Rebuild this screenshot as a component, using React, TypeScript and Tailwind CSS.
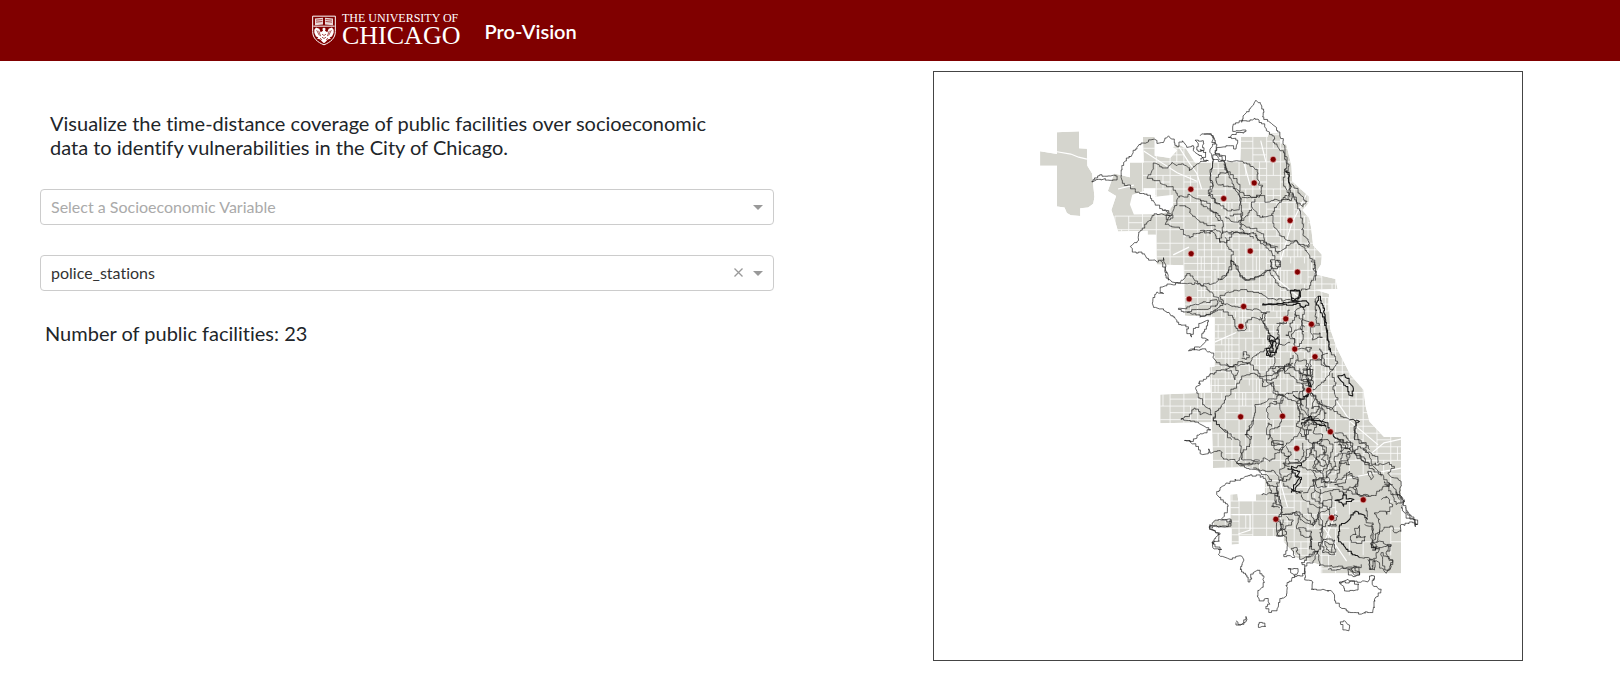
import { useState } from "react";

type Point = [number, number];

/* A traced group: origin of the map tile, then its lines, in thirds of a map unit. */
type Tile = { x: number; y: number; lines: string[]; heavy?: string[] };

const LAND = [
  "345,184 401,181 401,225 421,226 422,270 434,290 440,350 437,368 424,378 404,380 404,400 380,398 370,392 364,378 345,375 345,270 302,270 302,233 345,240",
  "563,196 593,196 593,244 632,250 650,230 638,222 655,216 672,225 695,262 735,262 810,260 812,195 880,195 880,186 912,186 912,212 927,215 940,270 942,310 985,350 985,365 968,385 985,405 990,430 995,475 1018,500 1015,525 1000,550 1052,562 1057,588 1000,590 1035,600 1038,690 1055,740 1090,810 1123,848 1128,890 1138,930 1175,970 1218,970 1218,1322 1014,1322 1014,1300 950,1280 950,1275 920,1240 920,1225 807,1225 807,1246 788,1248 788,1205 745,1200 740,1185 785,1185 785,1118 803,1117 805,1135 850,1135 850,1117 872,1117 872,1060 830,1048 741,1050 738,932 607,934 607,860 735,855 732,790 745,788 745,660 670,657 666,527 598,525 596,448 575,448 575,438 500,440 490,405 483,384 495,348 474,335 490,290 530,300 530,262 565,262",
];
const HOLE =
  "536,345 565,335 565,328 595,328 595,350 640,345 640,372 625,390 600,395 540,396 530,370";

const DIAGONALS = [
  "345,234 380,240 400,248 421,253",
  "565,232 610,262 650,288 700,310",
  "655,222 680,262 700,290 712,330",
  "862,205 875,260",
  "820,265 835,320",
  "900,560 960,610",
  "745,725 800,700",
  "680,480 640,500",
  "910,1080 930,1150",
  "1020,1200 1080,1290",
  "1145,1010 1175,985 1218,975",
  "1060,1080 1218,1050",
  "500,330 540,320",
  "1020,1250 1055,1160",
  "1050,870 1090,930 1160,990",
  "990,320 940,420 900,560",
  "790,1170 835,1170 835,1210 805,1220",
];

const TILES: Tile[] = [
  {
    x: 1020,
    y: 80,
    lines: [
      "213,303 222,292 238,285 262,286 285,286 290,292 285,298 235,296 215,304",
      "305,268 310,245 318,232 335,222 345,205 358,190 385,183 402,175 410,188 430,185 445,165 455,175 470,198 487,180 500,200 520,195 525,215 565,240 548,242 530,250 508,270 490,252 470,255 455,245 440,262 400,247 395,270 380,293 410,300 430,312 455,318 478,350 510,342 530,355 560,362 580,395 600,420",
      "305,268 302,290 312,308 345,330 380,340 405,370 435,390 450,405 470,375 475,350",
      "478,375 510,385 508,395 525,410 545,425 560,430 585,440",
      "450,405 410,400 380,425 358,455 355,480 330,498 340,515 365,515 385,535 410,545 430,532 435,560 445,600",
      "450,405 435,432 470,440 490,455 512,472 540,455 575,450 600,485",
      "552,160 578,165 585,190 570,205 580,240",
      "525,178 550,180 550,210 530,208 535,190 525,178",
      "580,240 570,290 578,305 565,340 600,370",
      "430,388 445,390 458,405 445,418 438,400",
    ],
  },
  {
    x: 1200,
    y: 80,
    lines: [
      "168,58 185,75 192,95 188,108 215,128 230,140 240,165 255,195 262,240 268,290 270,320 280,345 300,385 308,430 310,465 325,480 328,500 305,492 280,482 262,480 240,460 222,440 215,400 235,370 265,350 272,320",
      "168,58 150,85 135,100 128,120 100,130 98,148 120,150 138,152 118,155 85,170 112,178 108,205 85,195 60,200 45,212 38,235 55,242 75,240 72,225 45,218",
      "125,125 150,118 165,112 185,125 200,150 222,165 220,185 235,200 250,210 260,270 250,290 262,330 270,350",
      "80,240 110,240 150,250 172,272 172,295 188,318 185,340 155,352 120,335 100,310 85,280 75,250",
      "40,240 32,290 40,315 25,345 50,370 80,390 118,388 125,355 100,320 50,308 48,290 60,276 85,275",
      "125,350 160,350 190,345 200,365 215,360 250,358 262,345",
      "0,360 30,385 60,405 70,430 68,460 95,452 120,460 160,455 175,480 200,490 235,520 255,505 285,480 320,510 345,545 345,600",
      "165,355 155,380 180,410 215,405",
      "75,410 110,425 130,420 155,385",
      "90,405 125,400 125,430 150,440 190,460 200,485 235,500",
      "0,450 30,460 45,445 65,460 60,487 80,487 75,470",
      "95,460 80,490 100,520 95,540 80,580 60,600",
      "95,540 120,580 138,600 170,590 205,570 220,565 240,600",
      "0,165 15,160 40,165 35,185 50,190 45,215 70,240 80,270 100,290 120,320 118,345 128,395 120,440 135,460",
      "0,205 18,215 12,230 0,235",
      "275,310 295,330 322,362 310,378 290,365 280,340 275,360 255,350",
      "228,540 240,545 238,560 228,558 228,540",
      "165,465 190,490 215,515 225,535 212,545 215,565",
      "45,222 72,242 80,268",
      "85,460 115,456 150,460 160,475",
    ],
    heavy: ["255,265 268,275 266,300 275,320"],
  },
  {
    x: 1120,
    y: 260,
    lines: [
      "120,0 135,20 135,45 155,65 180,68 195,52 210,40 225,62 245,75 280,70 315,45 335,20 335,0 360,40 380,60 410,50 450,28 460,50 475,75 510,90",
      "452,0 455,18 470,25 482,10 470,0",
      "575,0 585,15 580,25 590,45 575,60 570,85 545,92",
      "180,68 240,70 275,95 310,130",
      "180,68 140,75 120,88 130,100 110,95 98,115 100,140 130,150 170,180 190,195 205,200 200,215 215,230 220,205 240,190 265,180 245,230 265,240 240,262 205,272 240,268 270,275 285,300 310,315 340,320 385,310 410,285 435,265 450,255",
      "175,148 200,140 240,130 290,118 292,135 245,148 195,155 175,148",
      "200,157 240,168 270,162 300,140 310,130 300,112 315,100 370,88 400,95 440,110 470,120 500,118",
      "310,130 340,138 380,145 420,150 440,160 430,190 450,220",
      "240,172 285,150 310,148 340,178 345,200 362,212 380,205 382,180 395,172 420,180 430,160 450,155",
      "555,200 545,185 555,150 545,140 525,155 530,170 510,190 515,215 498,225 525,240 525,267 535,300 525,320",
      "470,190 495,190 510,150",
      "478,235 470,210 480,190 498,180",
      "550,195 550,240 530,265 560,262 575,262 570,275 558,270 560,262",
      "575,195 578,240 608,232 600,218 580,222",
      "590,180 600,195 585,200 570,185 545,175",
      "600,265 608,285 600,300 572,300 570,330 580,350 570,391",
      "635,275 655,310 640,330 615,315 608,285 625,280",
      "640,330 605,370 580,391",
      "637,340 650,370 640,390 655,420 635,450 600,430 570,391",
      "320,310 340,320 355,335 345,360 340,345 318,325",
      "340,320 270,345 235,370 240,375 228,380 230,400 255,440 270,450 275,465 250,460 240,465 235,448 222,445 215,462 190,475",
      "340,320 360,305 400,315 415,340 430,350 460,345 490,330 505,312 525,325 540,340 560,350",
      "285,455 310,430 345,385 365,350 400,340 428,355 430,380 460,365 465,390 490,410 530,425 550,440",
      "285,455 280,480 310,510 335,540",
      "535,395 500,400 440,425 405,440 400,490 380,520 390,540",
      "490,415 480,440 488,469 480,500 450,510 445,540",
      "490,320 500,340 520,350 545,370 555,390 540,400 545,430 535,450 550,480",
      "550,330 580,330 578,345 548,345 545,362 580,362 578,375 555,375",
      "570,400 600,430 590,455 570,470 600,480 632,516",
      "600,430 650,455 690,480 720,485 705,510 705,540",
      "370,290 370,275 380,280 388,285 375,298 365,295",
      "462,290 462,320 440,335 440,360 470,355 475,330 520,310",
      "565,310 562,340 568,380 560,430 568,470 558,540",
      "535,300 560,300 560,370 545,370",
      "450,480 440,455 450,430 470,430",
      "595,108 585,125 592,150 588,180",
      "500,118 530,124 545,140",
    ],
    heavy: [
      "512,90 540,90 542,110 530,124 516,118 512,90",
      "514,92 538,92 538,112 528,120 518,112",
      "428,130 480,130 520,125 555,122 567,130 550,142 535,130 510,135 470,133 428,132",
      "445,225 448,245 460,240 455,260 440,270 450,290 465,285 478,250 475,230 465,245 455,240 460,270 450,280",
      "600,108 590,130 602,150 612,170 620,210 632,275 625,240 618,180 608,130 600,108",
      "655,350 675,343 690,370 700,380 698,408 688,405 680,380 655,350",
      "565,370 570,391 560,410 540,420 520,405",
      "545,480 570,470 590,490 620,500",
    ],
  },
  {
    x: 1120,
    y: 400,
    lines: [
      "182,58 190,55 182,58 235,70 272,90 240,102 220,125 193,122 225,132 235,140 240,162 265,162 265,148 275,160 300,152 310,175 350,188",
      "285,40 280,60 310,90 360,125 365,160 350,188 380,195 430,185 435,175 450,185 465,170 480,150 520,120 560,70",
      "400,60 375,105 395,110 390,140 370,150 365,180 420,182",
      "350,188 380,205 420,215 460,212 490,245 480,215 510,190",
      "455,80 445,70 440,100 455,115 465,150 490,150",
      "455,125 490,128 490,136 455,136 455,125",
      "290,285 325,320 320,340 305,358 335,362 325,382 290,380 270,375 270,390 300,405 275,430 300,450",
      "290,285 300,265 330,245 390,228 430,230 440,245 455,280 425,285",
      "400,205 440,225 455,245 440,250 470,265 470,290 485,320 485,345 470,360 490,375 470,410 500,405 490,390 520,365 500,350",
      "470,300 455,320 480,325",
      "490,245 510,235 520,210 500,230 470,250 475,275 465,290",
      "485,345 530,335 560,360 580,380 600,340 630,330 635,300",
      "525,340 540,350 530,380 550,410 575,412 570,450",
      "580,130 590,175 580,200 610,215 625,200 605,180 620,150 600,130 580,130",
      "580,240 610,235 620,250 650,245 690,225 715,235 715,260 690,262 680,280 640,270 600,280 585,270 580,240",
      "545,285 550,300 570,310 600,325 610,310 635,300 630,280",
      "600,120 630,125 640,140 630,180 638,205 625,230 610,235",
      "575,60 590,75 580,100 610,105 600,125 580,130 575,160 550,190",
      "645,245 660,210 670,160 690,155 688,180 665,185",
      "690,60 720,65 705,80 705,120 735,130 750,150",
      "600,340 610,380 600,400 610,420 600,450",
      "625,378 632,372 648,373 650,380 625,378",
      "630,345 655,350 650,362 640,365",
      "700,265 720,290 750,290",
      "540,0 550,30 570,60",
      "605,0 610,30 590,50 570,58",
      "500,140 515,165 490,190 510,200",
      "530,80 550,90 575,90 555,110 540,100",
      "540,200 580,215 590,235 580,260 550,280",
      "655,120 700,130 690,150 655,135",
      "550,130 552,170 540,185 525,180",
      "350,188 380,192 420,190",
      "655,120 690,150 745,195",
      "480,290 488,340 470,370 475,410 490,410",
    ],
    heavy: [
      "510,190 545,190 530,205 515,200 520,220 540,235 530,250 515,270 545,280",
      "645,303 670,297 672,280 680,296 703,300 680,306 672,320 665,308 645,303",
      "545,75 570,60 610,65 625,75 632,95 655,120",
    ],
  },
  {
    x: 1180,
    y: 500,
    lines: [
      "88,85 105,62 155,65 145,80 110,82 88,85 115,100 118,125 98,125 98,145 125,150 115,165 150,180 185,170 192,182 180,210 210,248 220,220 240,213 252,235 250,260 232,290 240,305 258,298 270,315 258,325 275,340 295,325 300,300 320,290 322,250 345,232 325,208 355,208 352,225 345,232 370,230 375,205 365,190 415,155",
      "375,205 375,235 400,250 395,270 430,270 460,280 465,305 500,335 545,345 580,335 585,300 605,270 578,255 585,230 570,230 565,248 480,248 500,275 530,272 538,255 505,240 480,248",
      "168,365 180,376 192,370 198,352 198,368 182,378 168,370",
      "238,372 255,372 257,382 240,385 238,372",
      "482,368 495,365 510,378 508,395 490,388 482,368",
      "310,60 300,90 320,115 322,150 312,172 345,172 335,150 352,145 350,158 365,180 400,165 415,155 400,185 375,200",
      "515,122 515,110 530,105 525,90 540,78 540,95 530,115 558,112 555,125 530,132 515,122",
      "430,120 465,122 465,165 430,160 430,120",
      "435,125 460,135 458,160 440,150 435,125",
      "415,155 420,200 445,200 500,205 540,205 545,195",
      "445,210 500,208 540,225 520,232 505,210 530,200 540,225",
      "540,175 580,180 600,150 580,130 600,125 635,140 620,160 640,190 620,222 600,190 570,180 570,210 585,212 585,180",
      "675,0 665,25 680,50 705,60 714,75 708,82 700,70 665,75 665,95 645,100 640,80 600,95 590,130",
      "310,45 350,40 370,65 395,75 415,55",
      "355,85 395,95 395,150 415,155 430,100 415,60 420,20",
      "555,75 580,80 580,145 600,145",
      "605,160 620,170 640,190 625,215 610,200 605,160",
      "565,180 570,210 580,210 580,185",
      "520,200 540,225 525,228 515,205",
    ],
    heavy: [
      "540,175 500,150 475,115 480,80 495,72 510,60 530,35 550,45 565,60",
      "578,145 588,145 588,152 578,152",
    ],
  },
  {
    x: 1300,
    y: 420,
    lines: [
      "165,0 170,40 180,60 200,70 190,90 235,110 235,130",
      "165,100 175,80 200,90 215,130 250,135 270,128 285,140 265,160 285,175 305,185 300,220 315,245 290,255 280,225 260,200",
      "205,160 215,155 222,172 215,180 205,160",
      "245,240 260,230 280,255 262,285 245,275 225,280 240,300 240,330 225,360 215,385",
      "175,225 230,228 240,215 260,200 280,195",
      "105,195 130,190 150,155 160,175 175,180 165,200 175,225 130,205 105,195",
      "100,150 120,150 120,125 150,135 140,110 160,90",
      "200,265 200,310 220,310 215,385 245,385 275,375 265,395",
      "290,215 310,235 320,270 350,315 355,310 335,290 320,270",
      "60,60 75,90 50,120 70,140 90,125 75,95",
      "40,180 75,180 80,200 55,205 40,180",
      "105,40 130,40 165,95 210,130 250,165 268,190 290,210 300,240",
      "165,100 200,128 245,170",
      "255,185 270,190 265,200 255,195",
      "280,220 300,225 305,250",
    ],
  },
  {
    x: 1240,
    y: 280,
    lines: [
      "165,190 155,170 165,150 185,150 185,120 165,100",
      "150,185 135,195 110,190",
      "180,265 180,300 215,300 210,265 180,280",
      "190,310 190,350 175,365 180,400 170,440",
      "210,330 225,360 215,385 240,380 260,400 245,430",
      "70,300 95,310 100,335 130,350 120,370 100,365",
      "225,235 245,240 250,255 270,260",
      "95,265 130,260 150,250 160,225",
      "245,440 215,430 195,440 200,420 230,410",
      "60,110 75,135 90,165",
      "95,265 105,280 125,262 135,275 150,255 165,270",
    ],
    heavy: [
      "190,350 205,345 215,320 205,300",
      "90,165 105,175 110,205 90,230 80,220 95,195 90,165",
    ],
  },
  {
    x: 1220,
    y: 430,
    lines: [
      "255,0 260,30 280,45 275,75 300,95 285,115",
      "280,120 310,130 305,160 330,155 320,125 350,110 345,80 365,70 360,30",
      "240,100 260,90 260,60 285,55",
      "300,180 300,220 320,230 330,250 325,275 300,300",
      "285,180 275,200 290,215 300,225",
      "265,235 275,260 285,285",
      "160,40 190,45 185,70 210,80 205,105",
      "150,190 175,190 165,215 190,235",
      "190,160 205,175 230,190 250,185",
      "345,40 370,30 385,50 360,65",
      "180,270 185,295 175,310",
    ],
    heavy: ["205,115 240,125 230,140 245,150 230,170 215,190"],
  },
];

const STATIONS: Point[] = [
  [1190.7, 188.7], [1191, 253.3], [1273.3, 158.7], [1254.3, 182.3], [1223.7, 198],
  [1290.3, 220], [1250.3, 250.7], [1297.7, 271.7], [1189, 298.7], [1243.7, 306.3],
  [1241, 326.3], [1286, 318.7], [1311.7, 324], [1295, 349], [1315.3, 356.7],
  [1309, 390.3], [1240.7, 417], [1282.7, 416.3], [1330.7, 432], [1297, 448.7],
  [1363.7, 500.3], [1332, 518.3], [1276, 519.7],
];

const parse = (line: string): Point[] =>
  line.split(" ").map((pair) => pair.split(",").map(Number) as Point);

/* Stable pseudo-random value in [0, 1) for a pair of numbers. */
const noise = (a: number, b: number) => {
  const s = Math.sin(a * 12.9898 + b * 78.233) * 43758.5453;
  return s - Math.floor(s);
};

/* Joins the points with the small square steps that travel-time contours have. */
const contour = (tile: Tile, line: string, spread: number) => {
  const points = parse(line).map(([u, v]): Point => [tile.x + u / 3, tile.y + v / 3]);
  let d = `M${points[0][0].toFixed(1)} ${points[0][1].toFixed(1)}`;
  for (let i = 1; i < points.length; i++) {
    const [x0, y0] = points[i - 1];
    const [x1, y1] = points[i];
    const length = Math.hypot(x1 - x0, y1 - y0);
    const steps = Math.max(1, Math.round(length / 2.6));
    for (let k = 1; k <= steps; k++) {
      const t = k / steps;
      const s = k === steps ? 0 : spread;
      const x = x0 + (x1 - x0) * t + (noise(x0 + k, y1) - 0.5) * s;
      const y = y0 + (y1 - y0) * t + (noise(y0, x1 + k) - 0.5) * s;
      const turn = noise(x, y);
      if (turn > 0.7) d += `H${x.toFixed(1)}`;
      else if (turn > 0.4) d += `V${y.toFixed(1)}`;
      d += `L${x.toFixed(1)} ${y.toFixed(1)}`;
    }
  }
  return d;
};

const closed = (line: string) => "M" + line.split(" ").join("L") + "Z";
const open = (line: string) => "M" + line.split(" ").join("L");

/* Tract boundaries: a street grid, finer towards the middle of the city. */
const streets = () => {
  let d = "";
  const w = 35;
  const h = 35;
  for (let row = 0; row < 33; row++) {
    for (let col = 0; col < 21; col++) {
      const x = 492 + col * w;
      const y = 190 + row * h;
      const far = x > 1040 && y > 1060;
      const dense = y > 330 && y < 860 && x > 700;
      if (x < 530 && y < 380) continue;
      const n = noise(col + 3, row + 7);
      if (!far || n > 0.75) {
        d += `M${x} ${y}h${w}`;
        d += `M${x} ${y}v${h}`;
      }
      if (n > (dense ? 0.25 : 0.7) && !far) d += `M${x + 17} ${y}v${h}`;
      if (noise(row, col) > (dense ? 0.4 : 0.75) && !far) d += `M${x} ${y + 17}h${w}`;
      if (dense && n > 0.65) d += `M${x + 9} ${y}v${h}`;
      if (dense && n < 0.3) d += `M${x + 26} ${y}v17`;
    }
  }
  return d;
};

const LIGHT_LINES = TILES.map((t) => t.lines.map((l) => contour(t, l, 2.4)).join("")).join("");
const HEAVY_LINES = TILES.map((t) =>
  (t.heavy ?? []).map((l) => contour(t, l, 1.6)).join(""),
).join("");
const STREETS = streets();

function CoverageMap() {
  return (
    <svg viewBox="933 71 590 590" role="img" aria-label="Map of Chicago" className="block w-full">
      <defs>
        <clipPath id="city">
          <path d={LAND.map(closed).join("")} />
        </clipPath>
      </defs>
      <g transform="translate(920 60) scale(.3954 .389)" clipPath="url(#city)">
        <path d={LAND.map(closed).join("")} fill="#d5d5ce" />
        <path d={STREETS} fill="none" stroke="#fff" strokeWidth="2.4" strokeOpacity=".8" />
        <path d={DIAGONALS.map(open).join("")} fill="none" stroke="#fff" strokeWidth="3" />
        <path d={closed(HOLE)} fill="#fff" />
      </g>
      <path d={LIGHT_LINES} fill="none" stroke="#222" strokeWidth=".7" strokeLinejoin="round" />
      <path d={HEAVY_LINES} fill="none" stroke="#1a1a1a" strokeWidth="1.1" strokeLinejoin="round" />
      {STATIONS.map(([x, y]) => (
        <circle key={`${x}-${y}`} cx={x} cy={y} r="3" fill="#800000" stroke="#f0b4b4" strokeWidth=".6" />
      ))}
    </svg>
  );
}

function Crest() {
  return (
    <svg viewBox="0 0 72 90" className="h-[31px] w-6" aria-hidden="true">
      <path
        d="M2 2H70V48C70 68 56 80 36 88C16 80 2 68 2 48Z"
        fill="none"
        stroke="#fff"
        strokeWidth="3"
      />
      <path d="M9 9L33 7V27L9 29ZM39 7L63 9V29L39 27Z" fill="#fff" fillOpacity=".85" />
      <path d="M12 14L31 12M12 20L31 18M41 12L60 14M41 18L60 20" stroke="#800000" strokeWidth="2" />
      <path d="M4 32H68" stroke="#fff" strokeWidth="3" />
      <path
        d="M36 36L41 40L39 46L46 50L50 40L60 36L65 43V52L60 63L53 65L57 69L47 72L42 78L36 83L30 78L25 72L15 69L19 65L12 63L7 52V43L12 36L22 40L26 50L33 46L31 40Z"
        fill="#fff"
      />
      <path
        d="M14 44L22 60M20 46L26 62M58 44L50 60M52 46L46 62M30 56L36 60L42 56M30 65L36 69L42 65M24 68L30 73M48 68L42 73"
        fill="none"
        stroke="#800000"
        strokeWidth="2"
      />
    </svg>
  );
}

function Caret() {
  return (
    <svg
      viewBox="0 0 10 5"
      className="pointer-events-none absolute right-[11px] top-4 h-[5px] w-[10px]"
      aria-hidden="true"
    >
      <path d="M0 0H10L5 5Z" fill="#999" />
    </svg>
  );
}

export default function App() {
  const [variable, setVariable] = useState("");
  const [facility, setFacility] = useState("police_stations");

  return (
    <div className="font-['Lato',sans-serif] text-[#212529] [font-variant-ligatures:none]">
      <header className="flex h-[61px] items-center gap-6 bg-[#800000] pl-[312px] text-white">
        <a href="#" className="flex items-center gap-[6px]">
          <Crest />
          <span className="flex flex-col pb-[2px] font-['Liberation_Serif',serif]">
            <span className="text-[12px] leading-[12px]">THE UNIVERSITY OF</span>
            <span className="text-[26px] leading-6">CHICAGO</span>
          </span>
        </a>
        <h1 className="text-[20px] font-semibold leading-6">Pro-Vision</h1>
      </header>
      <main className="grid grid-cols-2">
        <section className="pl-10 pr-9 pt-[50px]">
          <p className="max-w-[680px] px-[10px] text-[20px] leading-6">
            Visualize the time-distance coverage of public facilities over socioeconomic data to
            identify vulnerabilities in the City of Chicago.
          </p>
          <div className="relative mt-[30px]">
            <select
              aria-label="Socioeconomic variable"
              value={variable}
              onChange={(e) => setVariable(e.target.value)}
              className="block h-9 w-full appearance-none rounded border border-[#ccc] bg-white px-[10px] text-base text-[#aaa]"
            >
              <option value="">Select a Socioeconomic Variable</option>
            </select>
            <Caret />
          </div>
          <div className="relative mt-[30px]">
            <select
              aria-label="Public facility"
              value={facility}
              onChange={(e) => setFacility(e.target.value)}
              className="block h-9 w-full appearance-none rounded border border-[#ccc] bg-white px-[10px] text-base text-[#333]"
            >
              <option value="police_stations">police_stations</option>
              <option value=""></option>
            </select>
            <button
              type="button"
              aria-label="Clear"
              onClick={() => setFacility("")}
              className="absolute right-[27px] top-[9px] flex size-[17px] items-center justify-center"
            >
              <svg viewBox="0 0 9 9" className="size-[9px]" aria-hidden="true">
                <path d="M.5 .5L8.5 8.5M8.5 .5L.5 8.5" stroke="#999" strokeWidth="1.3" />
              </svg>
            </button>
            <Caret />
          </div>
          <p className="mt-[30px] px-[5px] text-[20px] leading-6">Number of public facilities: 23</p>
        </section>
        <section className="flex justify-center pb-4 pl-[26px] pt-[10px]">
          <div className="w-full max-w-[590px] border border-[#444]">
            <CoverageMap />
          </div>
        </section>
      </main>
    </div>
  );
}
